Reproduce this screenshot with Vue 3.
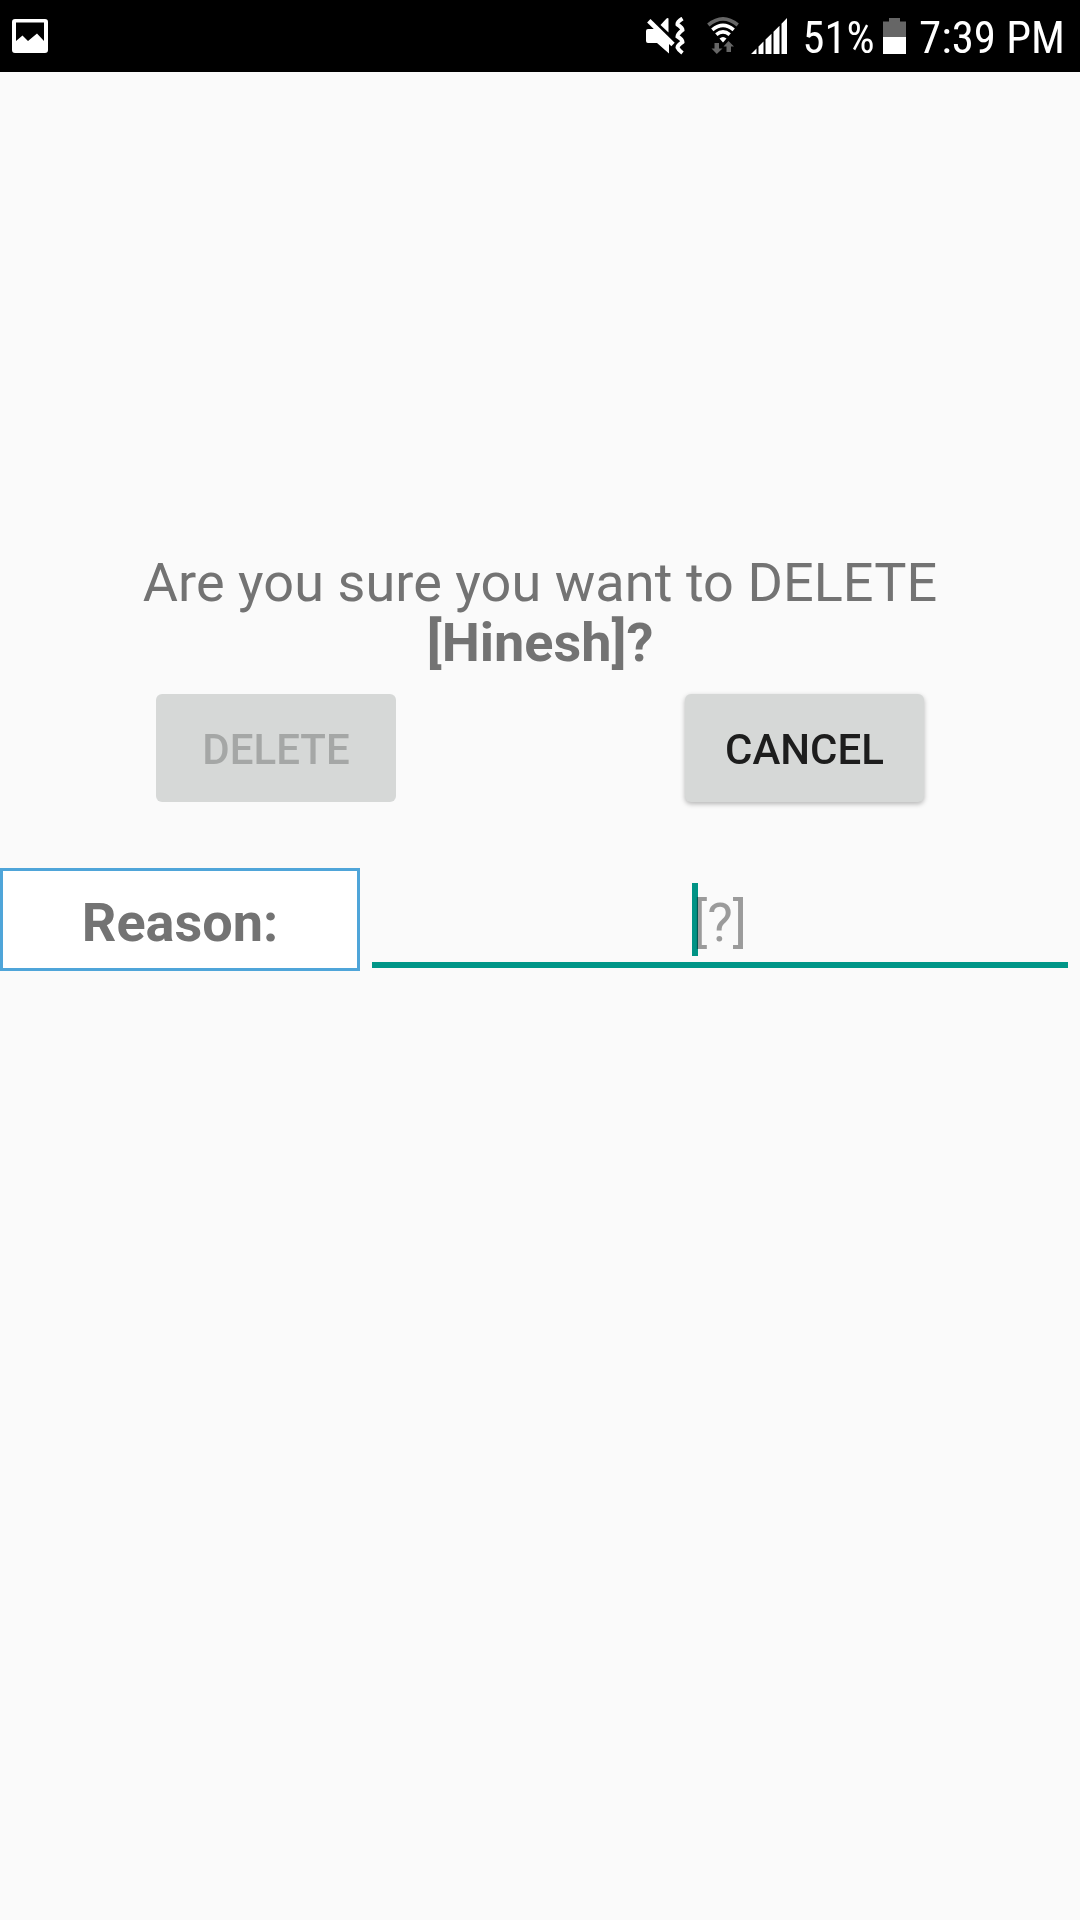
<script setup>
import { ref } from 'vue'

const battery = ref('51%')
const time = ref('7:39 PM')
const name = ref('Hinesh')
</script>

<template>
  <div class="screen">
    <header class="status">
      <svg class="picture" width="36" height="34" viewBox="0 0 36 34">
        <path fill="#fff" fill-rule="evenodd" d="M3 0H33Q36 0 36 3V31Q36 34 33 34H3Q0 34 0 31V3Q0 0 3 0ZM4 3.5V22L10.5 16.5L16 22L25 14.5L32 22V3.5Z" />
      </svg>

      <svg class="mute" width="39" height="38" viewBox="0 0 39 38">
        <path fill="#fff" d="M14.500 8L20.500 1.500Q22.500 0.500 22.500 2V15.500Z" />
        <path fill="#fff" d="M0 14Q0 12 2 12H11L23 24V36.500L11 26H2Q0 26 0 24Z" />
        <path d="M2.800 3.800L27 27.500" fill="none" stroke="#fff" stroke-width="4.800" />
        <path d="M36.500 1.500Q31 5 31.500 7.500Q36.500 11 36.500 13Q31.500 17 31.500 19.500Q36.500 22.500 36.500 25Q31.500 28.500 31.500 30.500Q32.500 33 36.500 36" fill="none" stroke="#fff" stroke-width="4" />
      </svg>

      <svg class="wifi" width="32" height="36" viewBox="0 0 32 36">
        <g fill="none">
          <path d="M1.300 8Q16 -4.200 30.700 8" stroke="#666" stroke-width="3.600" />
          <path d="M5.300 12.800Q16 4 26.700 12.800" stroke="#fff" stroke-width="3.600" />
          <path d="M9.300 17.600Q16 12 22.700 17.600" stroke="#fff" stroke-width="3.600" />
        </g>
        <path fill="#fff" d="M12.500 21.500Q16 18.500 19.500 21.500L16 25.500Z" />
        <path fill="#666" d="M7.500 26H12V31.500H15.500L9.800 37L4.500 31.500H7.500Z" />
        <path fill="#666" d="M19.500 35V29.500H16.500L21.500 24L27 29.500H24V35Z" />
      </svg>

      <svg class="signal" width="37" height="36" viewBox="0 0 37 36">
        <path fill="#fff" d="M0 36L5.500 30.500V36ZM7.500 36V28.600L12.500 23.600V36ZM14.500 36V21.600L20.500 15.700V36ZM22.500 36V13.700L28.500 7.800V36ZM30.500 36V5.800L36 0V36Z" />
      </svg>

      <svg class="percent" width="76" height="60">
        <text x="-0.5" y="45" textLength="72" lengthAdjust="spacingAndGlyphs">{{ battery }}</text>
      </svg>

      <svg class="battery" width="23" height="36" viewBox="0 0 23 36">
        <path fill="#666" d="M0 3.500H6V0H17V3.500H23V20H0Z" />
        <path fill="#fff" d="M0 19H23V36H0Z" />
      </svg>

      <svg class="clock" width="150" height="60">
        <text x="0" y="45" textLength="146" lengthAdjust="spacingAndGlyphs">{{ time }}</text>
      </svg>
    </header>

    <main>
      <p class="question">
        <span class="lead">Are you sure you want to DELETE</span><br />
        <b>[{{ name }}]?</b>
      </p>
      <div class="actions">
        <button class="btn" disabled>DELETE</button>
        <button class="btn raised">CANCEL</button>
      </div>
      <div class="reason">
        <div class="label">Reason:</div>
        <div class="field">
          <span class="hint">[?]<i class="caret"></i></span>
        </div>
      </div>
    </main>
  </div>
</template>

<style>
body {
  margin: 0;
  background: #fafafa;
}
</style>

<style scoped>
.screen {
  width: 1080px;
  height: 1920px;
  overflow: hidden;
  background: #fafafa;
  font-family: Roboto, sans-serif;
  color: #737373;
}
.status {
  display: flex;
  align-items: flex-start;
  height: 72px;
  background: #000;
}
.status svg {
  display: block;
  flex: none;
}
.status text {
  font-family: 'Roboto Condensed', Roboto, sans-serif;
  font-size: 45px;
  fill: #fff;
}
.picture {
  margin: 19px 0 0 12px;
}
.mute {
  margin: 17px 0 0 598px;
}
.wifi {
  margin: 17px 0 0 22px;
  overflow: visible;
}
.signal {
  margin: 18px 0 0 12px;
}
.percent {
  margin: 8px 0 0 15px;
}
.battery {
  margin: 18px 0 0 4px;
}
.clock {
  margin: 8px 0 0 13px;
}
.question {
  margin: 481px 0 0;
  font-size: 54px;
  line-height: 60px;
  text-align: center;
}
.lead {
  letter-spacing: 0.07px;
}
.question b {
  font-weight: 700;
}
.actions {
  display: flex;
  justify-content: space-between;
  padding: 0 156px;
  margin-top: 21px;
}
.btn {
  width: 240px;
  height: 108px;
  padding: 4px 0 0;
  border: 0;
  border-radius: 6px;
  background: #d6d8d7;
  color: #1d1d1d;
  font: 500 42px/50px Roboto, sans-serif;
}
.btn:disabled {
  color: #a5a7a6;
}
.raised {
  width: 239px;
  box-shadow: 0 2px 5px rgba(0, 0, 0, 0.28);
}
.reason {
  display: flex;
  align-items: flex-start;
  margin-top: 66px;
}
.label {
  box-sizing: border-box;
  width: 360px;
  height: 103px;
  border: 3px solid #4fa5d9;
  background: #fff;
  font-size: 54px;
  font-weight: 700;
  line-height: 103px;
  text-align: center;
}
.field {
  box-sizing: border-box;
  width: 696px;
  height: 100px;
  margin-left: 12px;
  border-bottom: 6px solid #009688;
  font-size: 54px;
  line-height: 109px;
  text-align: center;
  color: #9b9b9b;
}
.hint {
  position: relative;
}
.caret {
  position: absolute;
  left: -1px;
  top: -8px;
  width: 6px;
  height: 73px;
  background: #009688;
  mix-blend-mode: multiply;
}
</style>
